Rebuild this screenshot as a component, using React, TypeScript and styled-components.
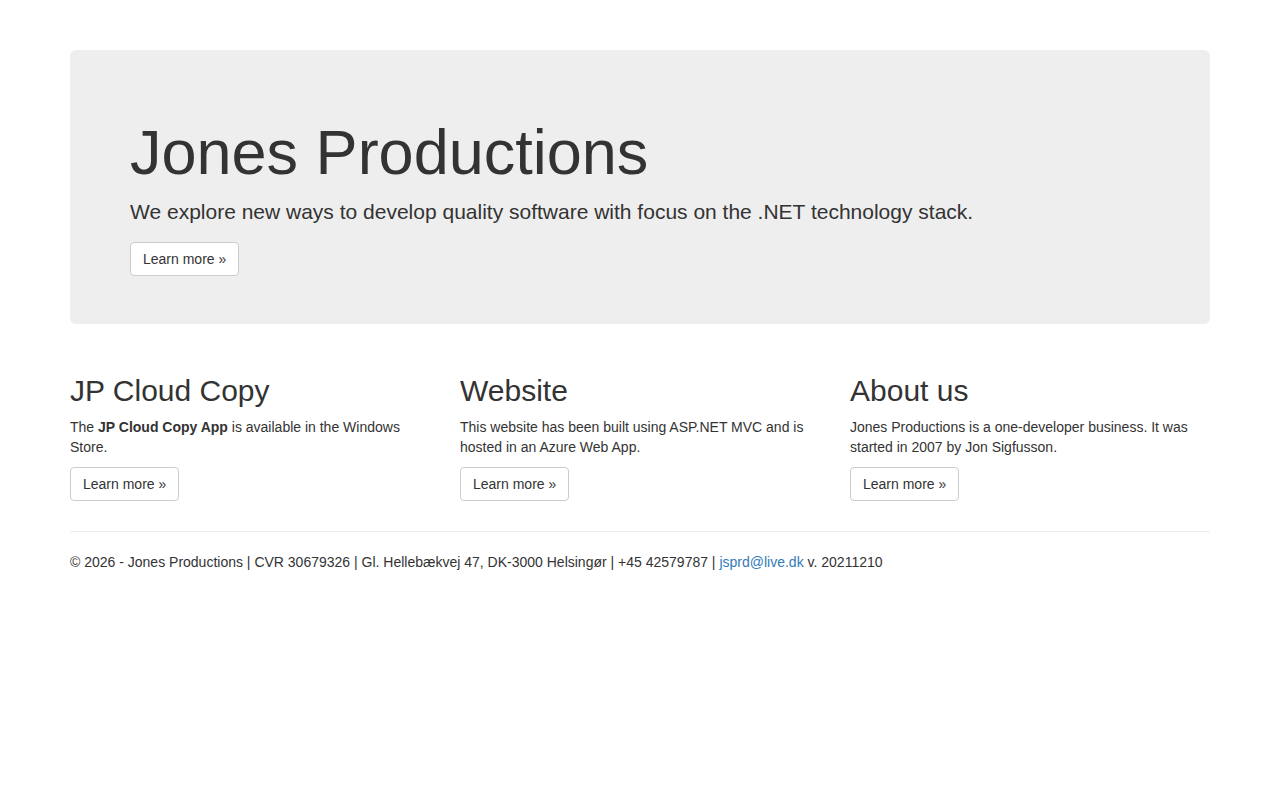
import React from 'react';
import styled, {createGlobalStyle} from 'styled-components';

const GlobalStyle = createGlobalStyle`
	* {
		box-sizing: border-box;
	}
	body {
		margin: 0;
		padding-top: 50px;
		font-family: "Liberation Sans", Arial, Helvetica, sans-serif;
		font-size: 14px;
		line-height: 1.42857143;
		color: #333;
		background: #fff;
	}
`;

const Container = styled.div`
	width: 1170px;
	margin: 0 auto;
	padding: 0 15px;
`;

const Jumbotron = styled.div`
	background-color: #eee;
	border-radius: 6px;
	padding: 48px 60px;
	margin-bottom: 30px;
`;

const HeroTitle = styled.h1`
	font-size: 63px;
	font-weight: 500;
	line-height: 1.1;
	margin: 20px 0 10px;
	color: inherit;
`;

const Lead = styled.p`
	font-size: 21px;
	font-weight: 200;
	line-height: 1.42857143;
	margin: 0 0 15px;
`;

const ButtonRow = styled.p<{$last?: boolean}>`
	margin: 0 0 ${p => (p.$last ? '0' : '10px')};
`;

const Button = styled.a`
	display: inline-block;
	padding: 6px 12px;
	font-size: 14px;
	line-height: 1.42857143;
	color: #333;
	background-color: #fff;
	border: 1px solid #ccc;
	border-radius: 4px;
	text-decoration: none;
	cursor: pointer;
	white-space: nowrap;
	&:hover {
		background-color: #e6e6e6;
		border-color: #adadad;
	}
`;

const Row = styled.div`
	display: grid;
	grid-template-columns: repeat(3, 1fr);
	margin: 0 -15px;
`;

const Column = styled.div`
	padding: 0 15px;
`;

const ColumnTitle = styled.h2`
	font-size: 30px;
	font-weight: 500;
	line-height: 1.1;
	margin: 20px 0 10px;
`;

const Text = styled.p`
	margin: 0 0 10px;
`;

const Divider = styled.hr`
	margin: 20px 0;
	border: 0;
	border-top: 1px solid #eee;
`;

const Footer = styled.footer`
	p {
		margin: 0 0 10px;
	}
`;

const Link = styled.a`
	color: #337ab7;
	text-decoration: none;
	&:hover {
		text-decoration: underline;
	}
`;

const columns = [
	{
		title: 'JP Cloud Copy',
		body: (
			<>
				The <strong>JP Cloud Copy App</strong> is available in the Windows Store.
			</>
		),
	},
	{
		title: 'Website',
		body: <>This website has been built using ASP.NET MVC and is hosted in an Azure Web App.</>,
	},
	{
		title: 'About us',
		body: <>Jones Productions is a one-developer business. It was started in 2007 by Jon Sigfusson.</>,
	},
];

const App = () => {
	return (
		<>
			<GlobalStyle />
			<Container>
				<Jumbotron>
					<HeroTitle>Jones Productions</HeroTitle>
					<Lead>We explore new ways to develop quality software with focus on the .NET technology stack.</Lead>
					<ButtonRow $last>
						<Button href="#">Learn more &raquo;</Button>
					</ButtonRow>
				</Jumbotron>
				<Row>
					{columns.map(c => (
						<Column key={c.title}>
							<ColumnTitle>{c.title}</ColumnTitle>
							<Text>{c.body}</Text>
							<ButtonRow>
								<Button href="#">Learn more &raquo;</Button>
							</ButtonRow>
						</Column>
					))}
				</Row>
				<Divider />
				<Footer>
					<p>
						&copy; 2026 - Jones Productions | CVR 30679326 | Gl. Hellebækvej 47, DK-3000 Helsingør | +45 42579787 |{' '}
						<Link href="mailto:jsprd@live.dk">jsprd@live.dk</Link> v. 20211210
					</p>
				</Footer>
			</Container>
		</>
	);
};

export default App;
